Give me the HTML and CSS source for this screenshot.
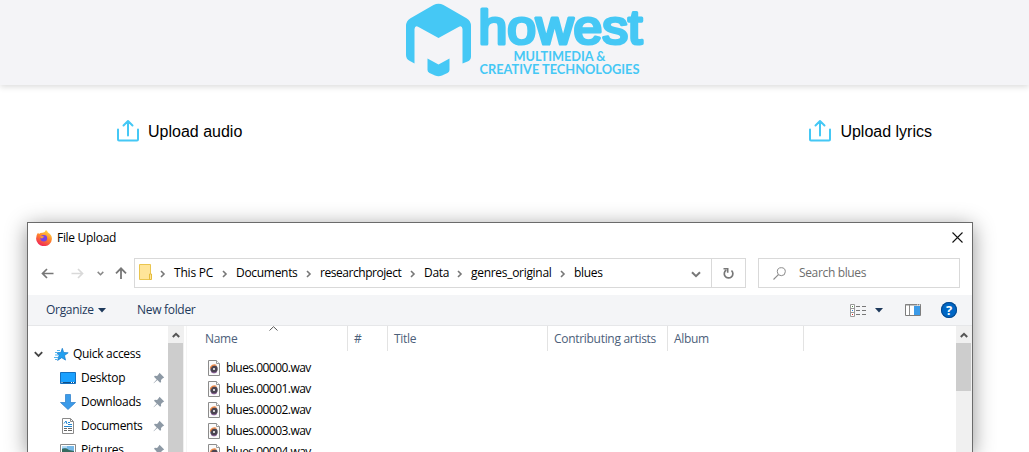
FILE: index.html
```html
<!DOCTYPE html>
<html lang="en">
<head>
<meta charset="utf-8">
<title>Howest upload</title>
<link rel="stylesheet" href="styles.css">
</head>
<body>
<svg width="0" height="0" class="defs">
  <symbol id="upload" viewBox="0 0 24 24"><path d="M2 10.500V20.500Q2 21.500 3 21.500H21Q22 21.500 22 20.500V10.500M12 16.500V2.500M7.500 6.500 12 2l4.500 4.500" fill="none" stroke="#45c8f5" stroke-width="2" stroke-linecap="round" stroke-linejoin="round"/></symbol>
  <symbol id="pin" viewBox="0 0 12 12"><path d="M6.500.8 11.200 5.500 9.800 6.200 8 8l.1 2-1 .8L4.300 8 .8 11.200.6 11 3.700 7.400 1 4.700l.9-.9 2.200.1L5.800 2z" fill="#8d99a5"/></symbol>
  <symbol id="wav" viewBox="0 0 12 16"><path d="M.5.500h8l3 3v12H.5z" fill="#fafafa" stroke="#8c8c8c"/><path d="M8.500.500v3h3" fill="#fff" stroke="#9a9a9a"/><circle cx="6" cy="9" r="3.700" fill="#4a4450"/><path d="M2.400 8.500a4 4 0 0 1 6-3" fill="none" stroke="#ee8744" stroke-width="1.300"/><path d="M3 11.500a4 4 0 0 0 6 0" fill="none" stroke="#80508f"/><circle cx="6" cy="9" r="1" fill="#fff"/></symbol>
  <symbol id="crumb" viewBox="0 0 6 8"><path d="M1 1l3 3-3 3" fill="none" stroke="#777" stroke-width="1.600"/></symbol>
  <symbol id="scrollup" viewBox="0 0 8 6"><path d="M.8 5 4 1.800 7.200 5" fill="none" stroke="#555" stroke-width="2"/></symbol>
</svg>

<header class="header">
  <svg class="logo" width="240" height="76" viewBox="0 0 240 76">
    <g fill="#45c8f5">
      <path d="M28.500 1.900Q33.500-.2 38.500 1.900L61.500 15.300Q66 18 66 23V53.500Q66 57 62.500 58.500L57.500 60.500V26Q57 22 53.500 24L33.500 35 13.500 24Q10 22 9.500 26V60.500L4.500 57.800Q1 56 1 52V23Q1 18 5.500 15.300Z"/>
      <path d="M22.500 55.500 33.500 61.500 44.500 55.500V67Q44.500 69 42.500 70L37 72.500Q33.500 74 30 72.500L24.500 70Q22.500 69 22.500 67Z"/>
    </g>
    <text class="logo-name" x="73.500" y="41.300" textLength="164" lengthAdjust="spacingAndGlyphs">howest</text>
    <text class="logo-sub" x="108.500" y="58" textLength="92" lengthAdjust="spacingAndGlyphs">MULTIMEDIA &amp;</text>
    <text class="logo-sub" x="74.500" y="71.200" textLength="160" lengthAdjust="spacingAndGlyphs">CREATIVE TECHNOLOGIES</text>
  </svg>
</header>

<main class="uploads">
  <div class="upload"><svg width="24" height="24"><use href="#upload"/></svg><span>Upload audio</span></div>
  <div class="upload"><svg width="24" height="24"><use href="#upload"/></svg><span>Upload lyrics</span></div>
</main>

<section class="dialog">
  <div class="titlebar">
    <svg width="16" height="16" viewBox="0 0 16 16">
      <defs><linearGradient id="fox" x1=".8" y1="0" x2=".3" y2="1"><stop offset="0" stop-color="#ffe14a"/><stop offset=".45" stop-color="#ff8a2a"/><stop offset="1" stop-color="#f0205a"/></linearGradient></defs>
      <path d="M10 0q1.500 1.200 2 2.600Q16 5 15.900 9A7.900 7.400 0 0 1 .1 8.500Q.1 5 2 2.800L3 4q1.500-1.500 3.500-1.300Q9 2.500 10 0z" fill="url(#fox)"/>
      <circle cx="7.800" cy="8.200" r="3.300" fill="#7542e5"/><path d="M4 6.500q2.500-1.500 4.500.6-2 .3-2.300 1.500Q4.500 8.500 4 6.500z" fill="#ff9d2e"/>
    </svg>
    <span class="title">File Upload</span>
    <svg class="close" width="11" height="11" viewBox="0 0 11 11"><path d="M.5.500l10 10M10.500.500l-10 10" stroke="#111" stroke-width="1.100"/></svg>
  </div>

  <div class="nav">
    <svg class="back" width="13" height="11" viewBox="0 0 13 11"><path d="M12.500 5.500H1.500M6 1 1.500 5.500 6 10" fill="none" stroke="#777" stroke-width="1.700"/></svg>
    <svg class="forward" width="13" height="11" viewBox="0 0 13 11"><path d="M.5 5.500h11M7 1l4.500 4.500L7 10" fill="none" stroke="#d9d9d9" stroke-width="1.700"/></svg>
    <svg class="recent" width="7" height="5" viewBox="0 0 7 5"><path d="M.7.900 3.500 3.700 6.300.900" fill="none" stroke="#888" stroke-width="1.500"/></svg>
    <svg class="up" width="12" height="12" viewBox="0 0 12 12"><path d="M6 12V1.500M1 6.300 6 1.300l5 5" fill="none" stroke="#777" stroke-width="1.800"/></svg>
    <div class="address">
      <svg class="folder" width="14" height="16" viewBox="0 0 14 16"><path d="M.5.500h11v15H.5z" fill="#ffe599" stroke="#eac54f"/><path d="M10.500 10h2v5.500h-2z" fill="#ffe599" stroke="#e5bb3c"/></svg>
      <div class="crumb c1"><svg width="6" height="8"><use href="#crumb"/></svg><span>This PC</span></div>
      <div class="crumb c2"><svg width="6" height="8"><use href="#crumb"/></svg><span>Documents</span></div>
      <div class="crumb c3"><svg width="6" height="8"><use href="#crumb"/></svg><span>researchproject</span></div>
      <div class="crumb c4"><svg width="6" height="8"><use href="#crumb"/></svg><span>Data</span></div>
      <div class="crumb c5"><svg width="6" height="8"><use href="#crumb"/></svg><span>genres_original</span></div>
      <div class="crumb c6"><svg width="6" height="8"><use href="#crumb"/></svg><span>blues</span></div>
      <svg class="drop" width="10" height="7" viewBox="0 0 10 7"><path d="M1 1.200 5 5.200 9 1.200" fill="none" stroke="#777" stroke-width="2"/></svg>
      <div class="refresh"><svg width="11" height="12" viewBox="0 0 11 12"><path d="M8.500 3.500A4.300 4.300 0 1 1 3.300 3" fill="none" stroke="#777" stroke-width="1.700"/><path d="M.5 1.700h4.200v4" fill="none" stroke="#777" stroke-width="1.600"/></svg></div>
    </div>
    <div class="search">
      <svg width="13" height="13" viewBox="0 0 13 13"><circle cx="8.300" cy="4.700" r="4" fill="none" stroke="#8a8a8a"/><path d="M5.400 7.600.5 12.500" stroke="#8a8a8a" stroke-width="1.100"/></svg>
      <span>Search blues</span>
    </div>
  </div>

  <div class="toolbar">
    <span class="organize">Organize</span>
    <svg class="organize-arrow" width="8" height="5" viewBox="0 0 8 5"><path d="M0 0h8L4 4.500z" fill="#1e395b"/></svg>
    <span class="new-folder">New folder</span>
    <svg class="views" width="17" height="13" viewBox="0 0 17 13"><path d="M.5.500h4v12h-4zM.5 4.500h4M.5 8.500h4" fill="#fff" stroke="#999"/><path d="M6 2.500h4M12 2.500h4M6 6.500h4M12 6.500h4M6 10.500h4M12 10.500h4" stroke="#777"/><path d="M2 2h1v1H2z" fill="#4a8a3a"/><path d="M2 6h1v1H2z" fill="#2d7fe0"/><path d="M2 10h1v1H2z" fill="#e02020"/></svg>
    <svg class="views-arrow" width="8" height="5" viewBox="0 0 8 5"><path d="M0 0h8L4 4.500z" fill="#1e395b"/></svg>
    <svg class="pane" width="16" height="12" viewBox="0 0 16 12"><path d="M.5.500h15v11H.5z" fill="#fff" stroke="#7d7d7d"/><path d="M0 1h16M4.500 1v10" stroke="#8b8b8b"/><path d="M9 2h6v9H9z" fill="#3c9be8"/><path d="M12 1h1M14 1h1" stroke="#fff"/></svg>
    <span class="help">?</span>
  </div>

  <div class="body">
    <aside class="tree">
      <div class="root">
        <svg class="expander" width="9" height="7" viewBox="0 0 9 7"><path d="M.8 1.200 4.500 4.900 8.200 1.200" fill="none" stroke="#444" stroke-width="1.800"/></svg>
        <svg class="star" width="15" height="13" viewBox="0 0 15 13"><path d="M8.300.3 9.700 4.500l4.500.3-3.700 2.700 1 4.600-3.800-2.400-4.100 2.700L5 7.600 2.800 4.600h4z" fill="#22a0f0" stroke="#1478c8" stroke-width=".7"/><path d="M3 2.500h3M1 4.500h3M1 7h3M0 9.500h4M1 11.500h2" stroke="#52b5ef"/></svg>
        <span>Quick access</span>
      </div>
      <div class="item">
        <svg width="16" height="16" viewBox="0 0 16 16"><path d="M.5 2.500h15v11H.5z" fill="#1aa1ff" stroke="#1570bf"/><path d="M1 12.500h14" stroke="#0d4f89"/><path d="M1.500 12.500h1M11 12.500h1M13 12.500h1" stroke="#fff"/></svg>
        <span>Desktop</span><svg class="pin" width="12" height="12"><use href="#pin"/></svg>
      </div>
      <div class="item">
        <svg width="16" height="16" viewBox="0 0 16 16"><path d="M5.500.500h5v8h5L8 15.500.5 8.500h5z" fill="#3b9be9" stroke="#287bc9" stroke-width=".7"/></svg>
        <span>Downloads</span><svg class="pin" width="12" height="12"><use href="#pin"/></svg>
      </div>
      <div class="item">
        <svg width="16" height="16" viewBox="0 0 16 16"><path d="M2.500.500h8l3 3v12h-11z" fill="#fff" stroke="#8a8a8a"/><path d="M10.500.500v3h3" fill="none" stroke="#8a8a8a"/><path d="M4 5.500 6 3l1 3M8 4.500h2M8 6.500h4M4 8.500h8" fill="none" stroke="#2586cf"/><path d="M4 10.500h3M8 10.500h4M4 12.500h3M8 12.500h4" stroke="#666"/></svg>
        <span>Documents</span><svg class="pin" width="12" height="12"><use href="#pin"/></svg>
      </div>
      <div class="item">
        <svg width="16" height="16" viewBox="0 0 16 16"><path d="M.5 2.500h15v11H.5z" fill="#fff" stroke="#8a8a8a"/><path d="M2 4h12v8H2z" fill="#77b9e8"/><path d="M2 7q4-2 7 1l5 1v3H2z" fill="#376b60"/><path d="M2 5h5" stroke="#e8f5ff"/></svg>
        <span>Pictures</span><svg class="pin" width="12" height="12"><use href="#pin"/></svg>
      </div>
    </aside>
    <div class="scrollbar long"><div class="scroll-button"><svg width="8" height="6"><use href="#scrollup"/></svg></div><div class="thumb"></div></div>
    <div class="list">
      <div class="columns">
        <span class="col name">Name<svg class="sort" width="9" height="5" viewBox="0 0 9 5"><path d="M.5 4.500 4.500.700 8.500 4.500" fill="none" stroke="#555"/></svg></span>
        <span class="col number">#</span><span class="col track">Title</span><span class="col artists">Contributing artists</span><span class="col album">Album</span>
      </div>
      <div class="files">
        <div class="file"><svg width="12" height="16"><use href="#wav"/></svg><span>blues.00000.wav</span></div>
        <div class="file"><svg width="12" height="16"><use href="#wav"/></svg><span>blues.00001.wav</span></div>
        <div class="file"><svg width="12" height="16"><use href="#wav"/></svg><span>blues.00002.wav</span></div>
        <div class="file"><svg width="12" height="16"><use href="#wav"/></svg><span>blues.00003.wav</span></div>
        <div class="file"><svg width="12" height="16"><use href="#wav"/></svg><span>blues.00004.wav</span></div>
      </div>
    </div>
    <div class="scrollbar"><div class="scroll-button"><svg width="8" height="6"><use href="#scrollup"/></svg></div><div class="thumb"></div></div>
  </div>
</section>
</body>
</html>
```
FILE: styles.css
```css
* { box-sizing: border-box; }
html, body { margin: 0; height: 452px; overflow: hidden; background: #fff; }
body { display: flex; flex-direction: column; font-family: "Liberation Sans", Arial, sans-serif; color: #000; }
svg { display: block; flex: none; }
.defs { position: absolute; }

.header { flex: none; height: 85px; padding: 3px 0 0 405px; background: #f4f4f7; box-shadow: 0 2px 6px rgba(0, 0, 0, .14); }
.logo { overflow: visible; }
.logo-name { font: 400 49px "Liberation Sans", Arial, sans-serif; fill: #45c8f5; stroke: #45c8f5; stroke-width: 3.2; stroke-linejoin: round; }
.logo-sub { font: 700 13px Lato, sans-serif; fill: #45c8f5; }

.uploads { flex: none; height: 137px; padding: 34px 97px 0 116px; display: flex; justify-content: space-between; align-items: flex-start; }
.upload { display: flex; align-items: center; gap: 8px; height: 24px; font-size: 16px; }
.upload span { padding-top: 2px; }

.dialog { flex: none; width: 946px; height: 230px; margin-left: 27px; border: 1px solid #6b6b6b; border-bottom: 0; background: #fff; box-shadow: 0 4px 20px rgba(0, 0, 0, .42); font-family: "Open Sans", "Noto Sans", sans-serif; font-size: 12px; line-height: 16px; letter-spacing: -.3px; }
.dialog span { white-space: nowrap; }
.titlebar { display: flex; align-items: center; height: 30px; padding: 0 9px 0 8px; }
.title { margin-left: 5px; }
.close { margin: 0 0 1px auto; }

.nav { display: flex; align-items: center; height: 42px; padding: 0 12px 2px 13px; }
.forward { margin-left: 17px; }
.recent { margin-left: 13px; }
.up { margin-left: 11px; }
.address { display: flex; align-items: center; width: 612px; height: 30px; margin-left: 7px; border: 1px solid #d9d9d9; }
.folder { margin: 0 7px 2px 4px; }
.crumb { display: flex; align-items: center; flex: none; gap: 8px; }
.c1 { width: 62px; letter-spacing: -.2px; }
.c2 { width: 84px; }
.c3 { width: 104px; letter-spacing: -.45px; }
.c4 { width: 47px; }
.c5 { width: 103px; }
.crumb svg { margin-top: 1px; }
.drop { margin: 2px 10px 0 auto; }
.refresh { display: flex; align-items: center; justify-content: center; width: 34px; height: 28px; border-left: 1px solid #d9d9d9; }
.search { display: flex; align-items: center; gap: 13px; width: 202px; height: 30px; margin-left: 12px; padding-left: 14px; border: 1px solid #d9d9d9; color: #6d6d6d; letter-spacing: -.4px; }
.search span { letter-spacing: -.35px; }

.toolbar { display: flex; align-items: center; height: 31px; padding-right: 15px; background: #f4f5f7; border-bottom: 1px solid #e6e7e9; color: #1e395b; }
.organize { width: 52px; margin-left: 18px; }
.new-folder { margin-left: 31px; }
.views { margin-left: auto; }
.views-arrow { margin-left: 8px; }
.pane { margin-left: 22px; }
.help { width: 16px; height: 16px; margin-left: 20px; border-radius: 50%; background: #0067c5; box-shadow: inset 0 0 0 1px #07488b; color: #fff; font-weight: 700; font-size: 13px; text-align: center; letter-spacing: 0; }

.body { display: flex; height: 126px; overflow: hidden; }
.tree { width: 140px; padding-top: 16px; }
.root, .item { display: flex; align-items: center; height: 24px; }
.expander { margin-left: 6px; }
.star { margin: 0 4px 0 11px; }
.item { padding: 0 3px 0 32px; }
.item span { margin-left: 5px; }
.pin { margin-left: auto; }
.scrollbar { width: 16px; background: #f0f0f0; }
.scroll-button { display: flex; align-items: center; justify-content: center; height: 17px; }
.thumb { width: 15px; height: 48px; background: #cdcdcd; }
.long .thumb { height: 109px; }
.list { flex: 1; margin-left: 2px; border-left: 1px solid #f5f5f5; }
.columns { display: flex; height: 25px; color: #4c607a; }
.col { border-right: 1px solid #e3e3e3; padding: 5px 0 0 6px; }
.name { position: relative; width: 161px; padding-left: 18px; }
.sort { position: absolute; left: 82px; top: 0; }
.number { width: 40px; }
.track { width: 160px; }
.artists { width: 120px; }
.album { width: 136px; }
.files { padding: 6px 0 0 21px; }
.file { display: flex; align-items: center; gap: 6px; height: 21px; letter-spacing: -.53px; }
```
